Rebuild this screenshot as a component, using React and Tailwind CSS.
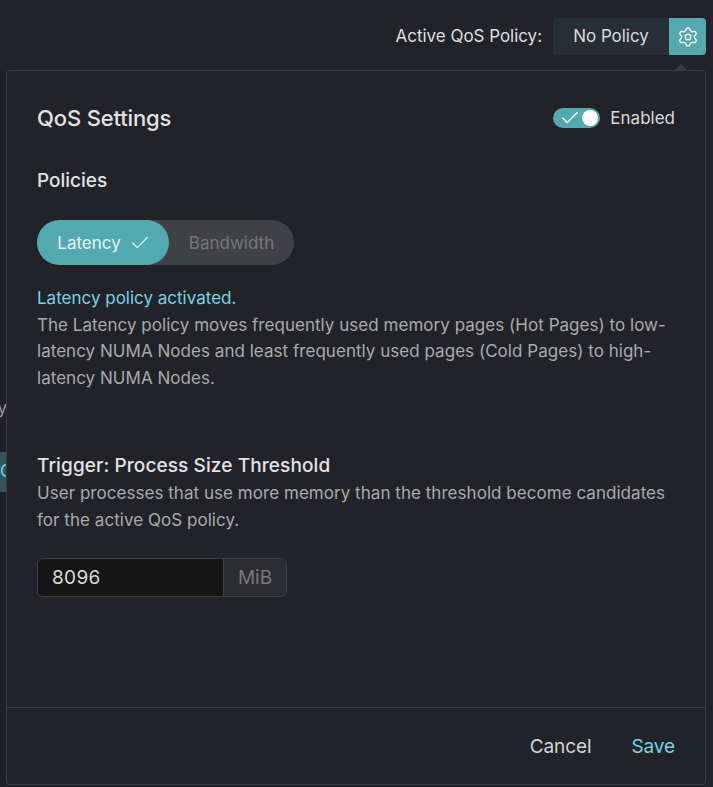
import { Check, Settings } from 'lucide-react'

function App() {
  return (
    <div className="relative h-[787px] w-[713px] overflow-hidden bg-[#222328] font-['Inter',sans-serif] text-[#e4e4e7]">
      {/* page behind the popover, only a sliver shows on the left */}
      <div className="absolute left-0 top-[72px] flex h-[715px] w-[7px] flex-col bg-[#1f2023]">
        <span className="mt-[324px] h-[24px] text-[17px] leading-[24px] text-[#9a9b9e] [direction:rtl]">y</span>
        <div className="mt-[32px] flex h-[40px] items-center overflow-hidden bg-[#35545c] text-[17px] text-[#6fd3ea]">C</div>
      </div>

      <div className="flex h-[70px] items-start justify-end pr-[7px] pt-[18px]">
        <span className="mr-[11px] text-[17px] leading-[37px] tracking-[-0.03px] text-[#dfdfe2]">Active QoS Policy:</span>
        <div className="flex h-[37px] w-[153px] overflow-hidden rounded-[4px] bg-[#262e36]">
          <span className="flex-1 text-center text-[17px] leading-[37px] tracking-[-0.05px] text-[#d9dadd]">No Policy</span>
          <button className="flex w-[37px] items-center justify-center bg-[#52a9af] text-white">
            <Settings size={22} strokeWidth={1.5} />
          </button>
        </div>
      </div>

      <div className="absolute left-[6px] top-[70px] flex h-[715px] w-[700px] flex-col rounded-[4px] border border-[#3b3c40] bg-[#222328]">
        <div className="absolute right-[17px] top-[-7px] h-0 w-0 border-x-[7px] border-b-[7px] border-x-transparent border-b-[#3b3c40]"></div>

        <div className="flex-1 px-[30px]">
          <div className="flex items-center justify-between pt-[33px]">
            <h2 className="text-[22px] font-[450] leading-[28px] tracking-[-0.15px] text-[#e2e2e5]">QoS Settings</h2>
            <div className="flex items-center gap-[10px]">
              <div className="flex h-[20px] w-[47px] items-center justify-between rounded-full bg-[#52a9af] pl-[6px] pr-[2px] text-white">
                <Check size={22} strokeWidth={1.4} />
                <span className="h-[16px] w-[16px] rounded-full bg-white"></span>
              </div>
              <span className="text-[17px] leading-[20px] text-[#d9dadd]">Enabled</span>
            </div>
          </div>

          <h3 className="mt-[35px] text-[19px] font-[450] leading-[28px] text-[#e2e2e5]">Policies</h3>

          <div className="mt-[25px] flex h-[45px] w-[257px] rounded-full bg-[#404145] text-[17px]">
            <div className="flex w-[132px] items-center justify-center gap-[8px] rounded-full bg-[#52a9af] pl-[2px] text-[#e6f4f4]">
              <span className="pt-[2px]">Latency</span>
              <Check size={22} strokeWidth={1.4} />
            </div>
            <div className="flex flex-1 items-center justify-center pt-[2px] text-[#77787b]">Bandwidth</div>
          </div>

          <p className="mt-[20px] text-[17px] leading-[26.4px] text-[#74d3ea]">Latency policy activated.</p>
          <p className="mt-[0.5px] text-[17px] leading-[26.3px] tracking-[0.035px] text-[#a9aaad]">
            The Latency policy moves frequently used memory pages (Hot Pages) to low-latency NUMA Nodes and least frequently used pages (Cold Pages) to high-latency NUMA Nodes.
          </p>

          <h3 className="mt-[61px] text-[19px] font-medium leading-[28px] tracking-[0.1px] text-[#e2e2e5]">Trigger: Process Size Threshold</h3>
          <p className="text-[17px] leading-[26.8px] tracking-[0.04px] text-[#a9aaad]">
            User processes that use more memory than the threshold become candidates for the active QoS policy.
          </p>

          <div className="mt-[25px] flex h-[39px] w-[250px] overflow-hidden rounded-[6px] border border-[#3f4044]">
            <div className="flex-1 bg-[#151516] pl-[14px] text-[19px] leading-[37px] tracking-[0.35px] text-[#d9dadd]">8096</div>
            <div className="w-[63px] border-l border-[#3f4044] bg-[#2c2d31] text-center text-[19px] leading-[37px] text-[#77787b]">MiB</div>
          </div>
        </div>

        <div className="flex h-[77px] items-center justify-end gap-[40px] border-t border-[#3b3c40] pr-[30px] pt-[2px] text-[19px] tracking-[-0.1px]">
          <span className="text-[#d4d5d8]">Cancel</span>
          <span className="text-[#74d3ea]">Save</span>
        </div>
      </div>
    </div>
  )
}

export default App
